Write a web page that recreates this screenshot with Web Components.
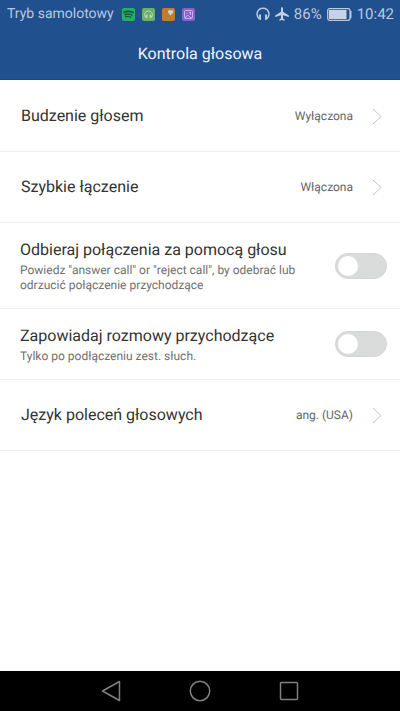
<!DOCTYPE html>
<html lang="pl">
<head>
<meta charset="utf-8">
<meta name="viewport" content="width=device-width, initial-scale=1">
<title>Kontrola głosowa</title>
<style>
html, body { margin: 0; }
body { font-family: Roboto, "Noto Sans", sans-serif; text-rendering: geometricPrecision; background: #fff; color: #333; }
</style>
</head>
<body>
<voice-screen></voice-screen>
<script>
const define = (name, html) => customElements.define(name, class extends HTMLElement {
  connectedCallback() {
    if (this.shadowRoot) return;
    this.attachShadow({ mode: 'open' }).innerHTML = html;
  }
});

define('status-bar', `
<style>
:host { display: flex; align-items: center; justify-content: space-between; height: 28px; padding: 0 6px 0 7px; color: #b9c8df; font-size: 15px; line-height: 28px; white-space: nowrap; }
div { display: flex; align-items: center; }
svg { display: block; flex: none; }
.mode { font-size: 14px; }
.apps { gap: 7px; margin-left: 8px; }
.system { gap: 5px; }
</style>
<div><span class="mode">Tryb samolotowy</span>
  <div class="apps">
    <svg width="13" height="13" viewBox="0 0 13 13"><rect width="13" height="13" rx="2" fill="#1fb264"/><g fill="none" stroke="#1b4b42" stroke-linecap="round"><path d="M2 4q5-1.600 9 .4" stroke-width="1.800"/><path d="M3 6.500q4-1 7 .4" stroke-width="1.400"/><path d="M3.500 8.800q3-.8 5.500.4" stroke-width="1.200"/></g></svg>
    <svg width="13" height="13" viewBox="0 0 13 13"><rect width="13" height="13" rx="2" fill="#6ab266"/><path d="M4.500 10C1.500 8.500 2 3 6.500 3S11.500 8.500 8.500 10" fill="none" stroke="#b5d5c5"/><path d="M4 6.500h1.400v4L3 9zM7.600 6.500H9L10 9l-2.400 1.500z" fill="#b5d5c5"/></svg>
    <svg width="13" height="13" viewBox="0 0 13 13"><rect width="13" height="13" rx="2" fill="#c17d2d"/><path d="M8.500 7.500L6 4.500Q5.500 2 7.300 2q.8 0 1.200.7Q9 2 9.800 2q1.900.2 1.400 2.500z" fill="#ced3df"/></svg>
    <svg width="13" height="13" viewBox="0 0 13 13"><rect width="13" height="13" rx="2" fill="#8960ce"/><g fill="none" stroke="#c3b5e5"><rect x="2.500" y="2.500" width="8" height="8" rx="1"/><path d="M3 10l2.500-3L7 8.500 10 10M4 4.500l1 1M6.500 5L9 4M8.500 4v3"/></g></svg>
  </div>
</div>
<div class="system">
  <svg width="14" height="14" viewBox="0 0 14 14"><path d="M3.500 12.200C-.8 9 .8 1.200 7 1.200S14.800 9 10.500 12.200" fill="none" stroke="#b9c8df" stroke-width="1.500"/><path d="M3 7.500h2v5.800L2.500 12zM11 7.500H9v5.800l2.500-1.300z" fill="#b9c8df"/></svg>
  <svg width="14" height="14" viewBox="0 0 14 14"><path d="M7 0q1 0 1 1.500v3.300l5.800 3.700V10L8 8.300v3L9.700 12.700V13.700L7 13l-2.700.7v-1L6 11.300v-3L.2 10V8.500L6 4.800V1.500Q6 0 7 0z" fill="#c3d0e4"/></svg>
  <span>86%</span>
  <svg width="25" height="13" viewBox="0 0 25 13"><rect x=".7" y=".7" width="22.300" height="11.600" rx="2" fill="none" stroke="#b9c8df" stroke-width="1.300"/><path d="M2 2h17.500v9H2z" fill="#c6d2e6"/><path d="M23 3h1.500v7H23z" fill="#b9c8df"/></svg>
  <span>10:42</span>
</div>`);

define('title-bar', `
<style>
:host { display: block; padding: 13px 16px 12px; border-bottom: 1px solid #1d477f; text-align: center; }
h1 { margin: 0; font-size: 16px; line-height: 26px; font-weight: 400; color: #f2f5f9; }
</style><h1><slot></slot></h1>`);

define('link-row', `
<style>
:host { display: block; border-bottom: 1px solid #eee; }
button { display: flex; align-items: center; width: 100%; min-height: 70px; padding: 0 18px 0 21px; border: 0; background: none; color: #333; font: inherit; text-rendering: inherit; text-align: left; cursor: pointer; }
.label { flex: 1; font-size: 16px; line-height: 22px; }
.value { font-size: 12px; line-height: 16px; color: #666; }
svg { flex: none; margin-left: 19px; }
</style>
<button type="button"><span class="label"><slot></slot></span><span class="value"><slot name="value"></slot></span>
<svg width="10" height="17" viewBox="0 0 10 17" aria-hidden="true"><path d="M1 1l8 7.500L1 16" fill="none" stroke="#c4c4c4"/></svg></button>`);

define('switch-row', `
<style>
:host { display: block; border-bottom: 1px solid #eee; }
label { display: flex; align-items: center; gap: 16px; min-height: 70px; padding: 0 13px 0 20px; box-sizing: border-box; cursor: pointer; }
.text { flex: 1; padding: 16px 0 15px; }
.title { display: block; font-size: 16px; line-height: 22px; white-space: nowrap; }
.note { display: block; margin-top: 2px; font-size: 12px; line-height: 15px; color: #707070; }
input { appearance: none; flex: none; display: flex; align-items: center; width: 52px; height: 26px; margin: 0; padding: 0 2px; box-sizing: border-box; border: 1px solid #d3d5d5; border-radius: 13px; background: #dadcdc; }
input::before { content: ""; width: 20px; height: 20px; border-radius: 50%; background: #fff; }
input:checked { background: #21508f; justify-content: flex-end; }
</style>
<label><span class="text"><span class="title"><slot></slot></span><span class="note"><slot name="note"></slot></span></span>
<input type="checkbox" role="switch"></label>`);

define('nav-bar', `
<style>
:host { display: flex; justify-content: center; gap: 49px; height: 40px; background: #000; }
button { display: grid; place-items: center; width: 40px; padding: 0; border: 0; background: none; }
svg { display: block; fill: none; stroke: #808080; stroke-width: 1.500; }
</style>
<button type="button" aria-label="Wstecz"><svg width="22" height="22" viewBox="0 0 22 22"><path d="M19.500 1.500v19L2.500 11z" stroke-linejoin="round"/></svg></button>
<button type="button" aria-label="Ekran główny"><svg width="22" height="22" viewBox="0 0 22 22"><circle cx="11" cy="11" r="9.700"/></svg></button>
<button type="button" aria-label="Ostatnie"><svg width="22" height="22" viewBox="0 0 22 22"><rect x="2.500" y="2.500" width="17" height="17" rx="1"/></svg></button>`);

define('voice-screen', `
<style>
:host { display: flex; flex-direction: column; min-height: 100vh; }
header { background: #21508f; }
main { flex: 1; padding-top: 1px; }
</style>
<header><status-bar></status-bar><title-bar>Kontrola głosowa</title-bar></header>
<main>
  <link-row>Budzenie głosem<span slot="value">Wyłączona</span></link-row>
  <link-row>Szybkie łączenie<span slot="value">Włączona</span></link-row>
  <switch-row>Odbieraj połączenia za pomocą głosu<span slot="note">Powiedz "answer call" or "reject call", by odebrać lub odrzucić połączenie przychodzące</span></switch-row>
  <switch-row>Zapowiadaj rozmowy przychodzące<span slot="note">Tylko po podłączeniu zest. słuch.</span></switch-row>
  <link-row>Język poleceń głosowych<span slot="value">ang. (USA)</span></link-row>
</main>
<nav-bar></nav-bar>`);
</script>
</body>
</html>
